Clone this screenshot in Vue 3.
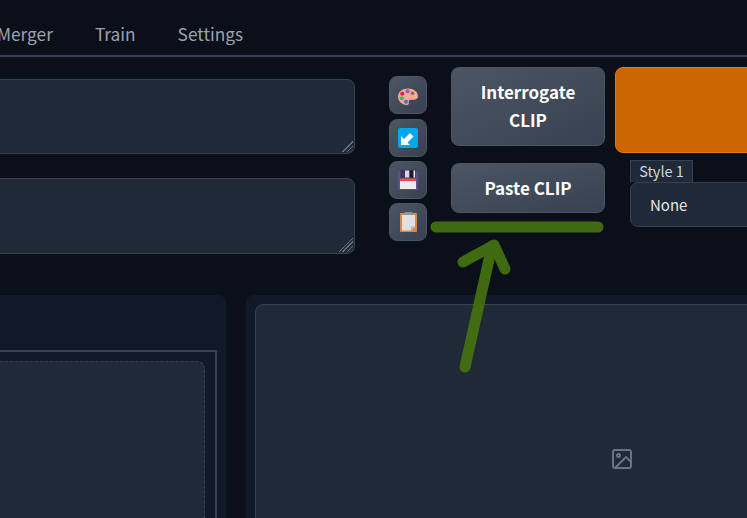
<template>
  <div class="page">
    <nav class="tabs">
      <span class="tab first">Merger</span>
      <span class="tab">Train</span>
      <span class="tab">Settings</span>
    </nav>

    <section class="top">
      <div class="prompts">
        <textarea class="prompt" aria-label="Prompt"></textarea>
        <textarea class="prompt second" aria-label="Negative prompt"></textarea>
      </div>

      <div class="tools">
        <button class="tool" type="button" aria-label="Palette">
          <svg class="palette" width="22" height="22" viewBox="0 0 22 22">
            <path d="M11 2.500C5.500 2.500 1 6 1 10.600c0 4.600 4 8.400 8.600 8.400 2 0 2.600-1.200 2.200-2.500-.5-1.600.4-2.700 2-2.700h3.200c2.200 0 4-1.400 4-3.500C21 5.600 16.500 2.500 11 2.500z" fill="#f4a998"/>
            <circle cx="5.200" cy="7.800" r="2" fill="#e8174f"/>
            <circle cx="10.500" cy="5.200" r="2" fill="#8d5bd6"/>
            <circle cx="15.500" cy="7.200" r="1.800" fill="#8a6f5c"/>
            <circle cx="4.800" cy="12.200" r="2" fill="#2fc35f"/>
            <circle cx="9" cy="15.800" r="2" fill="#5a5ee0"/>
          </svg>
        </button>
        <button class="tool" type="button" aria-label="Send to prompt">
          <svg width="20" height="20" viewBox="0 0 20 20">
            <rect width="20" height="20" rx="2" fill="#05a6ec"/>
            <path d="M3 17V8l3 3 6-6 3.500 3.500-6 6L12 17z" fill="#fff"/>
          </svg>
        </button>
        <button class="tool" type="button" aria-label="Save">
          <svg width="20" height="20" viewBox="0 0 20 20">
            <path d="M0 1h18l2 2v17H0z" fill="#5b4f8c"/>
            <rect x="2.500" y="0" width="15" height="8" fill="#3b3358"/>
            <rect x="7" y="0.500" width="4.500" height="7" fill="#d9d6e6"/>
            <rect x="11.500" y="0.500" width="4" height="7" fill="#1d1930"/>
            <rect x="15.500" y="0.500" width="1.500" height="7" fill="#e8e6ee"/>
            <rect x="2" y="8.500" width="16" height="2.500" fill="#e94b4b"/>
            <rect x="2" y="11" width="16" height="8" fill="#ececec"/>
          </svg>
        </button>
        <button class="tool" type="button" aria-label="Paste">
          <svg width="17" height="20" viewBox="0 0 17 20">
            <rect x="0" y="1" width="17" height="19" rx="1" fill="#d48a4a"/>
            <path d="M2 3h13v11.500L11 18.500H2z" fill="#dfe0e4"/>
            <path d="M11 18.500v-4h4z" fill="#b5b6bc"/>
            <rect x="4.500" y="0" width="8" height="3" rx="1" fill="#8f929a"/>
          </svg>
        </button>
      </div>

      <div class="clip">
        <button class="action tall" type="button">Interrogate<br />CLIP</button>
        <button class="action" type="button">Paste CLIP</button>
      </div>

      <div class="generate">
        <div class="orange"></div>
        <div class="style">
          <span class="style-label">Style 1</span>
          <div class="style-select">None</div>
        </div>
      </div>
    </section>

    <section class="bottom">
      <div class="panel left">
        <div class="frame">
          <div class="drop"></div>
        </div>
      </div>
      <div class="panel right">
        <div class="output">
          <svg width="24" height="24" viewBox="0 0 24 24" fill="none" stroke="#6b7280" stroke-width="2" stroke-linecap="round" stroke-linejoin="round">
            <rect x="3" y="3" width="18" height="18" rx="2" />
            <circle cx="8.500" cy="8.500" r="1.500" />
            <path d="M21 15l-5-5L5 21" />
          </svg>
        </div>
      </div>
    </section>

    <svg class="marks" width="747" height="518" viewBox="0 0 747 518" fill="none" stroke="#44720f" stroke-width="11" stroke-linecap="round" stroke-linejoin="round" aria-hidden="true">
      <path d="M436 227H598" />
      <path d="M465 367L492 246" />
      <path d="M463 262L494 245L505 269" />
    </svg>
  </div>
</template>

<script setup>
</script>

<style>
html,
body {
  margin: 0;
  background: #0b0f19;
}
</style>

<style scoped>
.page {
  position: relative;
  width: 747px;
  height: 518px;
  overflow: hidden;
  background: #0b0f19;
  font-family: "Noto Sans CJK SC", "Noto Sans", sans-serif;
}

.tabs {
  display: flex;
  align-items: center;
  gap: 42px;
  height: 43px;
  padding-top: 12px;
  border-bottom: 2px solid #374151;
  font-size: 17.300px;
  color: #9ca3af;
}

.tab.first {
  margin-left: -3px;
}

.top {
  display: flex;
  height: 238px;
}

.prompts {
  display: flex;
  flex-direction: column;
  gap: 24px;
  width: 355px;
  padding-top: 22px;
  flex: none;
}

.prompt {
  display: block;
  width: 375px;
  height: 75px;
  margin-left: -20px;
  box-sizing: border-box;
  background-color: #1f2937;
  background-image:
    linear-gradient(135deg, #1f2937 50%, transparent 50%),
    repeating-linear-gradient(135deg, #6b7280 0 1px, transparent 1px 3px);
  background-size: 14px 14px;
  background-position: right 1px bottom 1px;
  background-repeat: no-repeat;
  border: 1px solid #374151;
  border-radius: 8px;
  resize: none;
  outline: none;
}

.prompt.second {
  height: 76px;
}

.tools {
  display: flex;
  flex-direction: column;
  gap: 4px;
  width: 38px;
  margin-left: 34px;
  padding-top: 19px;
  flex: none;
}

.tool {
  display: flex;
  align-items: center;
  justify-content: center;
  width: 38px;
  height: 38px;
  padding: 0;
  box-sizing: border-box;
  background: linear-gradient(to bottom right, #4b5563, #374151);
  border: 1px solid #4b5563;
  border-radius: 8px;
}

.tool:nth-child(2) {
  margin-top: 1px;
}

.palette {
  margin-top: 4px;
}

.clip {
  display: flex;
  flex-direction: column;
  gap: 17px;
  width: 154px;
  margin-left: 24px;
  padding-top: 10px;
  flex: none;
}

.action {
  height: 50px;
  padding: 0;
  box-sizing: border-box;
  background: linear-gradient(to bottom right, #4b5563, #374151);
  border: 1px solid #4b5563;
  border-radius: 8px;
  color: #fff;
  font: 700 17px/28px "Noto Sans CJK SC", "Noto Sans", sans-serif;
}

.action.tall {
  height: 79px;
  padding-bottom: 2px;
}

.generate {
  display: flex;
  flex-direction: column;
  gap: 7px;
  margin-left: 10px;
  padding-top: 10px;
  flex: none;
  width: 160px;
}

.orange {
  height: 86px;
  background: #cc6600;
  border: 1px solid #e07b10;
  border-radius: 8px;
  box-sizing: border-box;
}

.style {
  margin-left: 15px;
}

.style-label {
  display: block;
  width: 63px;
  height: 22px;
  box-sizing: border-box;
  background: #1f2937;
  border: 1px solid #374151;
  border-bottom: 0;
  color: #d1d5db;
  font-size: 14.500px;
  line-height: 19px;
  text-align: center;
}

.style-select {
  height: 45px;
  box-sizing: border-box;
  padding-left: 19px;
  background: #1f2937;
  border: 1px solid #374151;
  border-radius: 8px;
  color: #e5e7eb;
  font-size: 15px;
  line-height: 44px;
}

.bottom {
  display: flex;
  gap: 20px;
  height: 223px;
}

.panel {
  box-sizing: border-box;
  background: #111827;
  border-radius: 8px 8px 0 0;
}

.panel.left {
  width: 226px;
  flex: none;
  padding: 55px 9px 0 0;
  border-top-left-radius: 0;
}

.frame {
  height: 168px;
  box-sizing: border-box;
  padding: 9px 10px 0 0;
  border-top: 2px solid #374151;
  border-right: 2px solid #374151;
}

.drop {
  height: 158px;
  box-sizing: border-box;
  background: #1f2937;
  border-top: 1px dashed #374151;
  border-right: 1px dashed #374151;
  border-top-right-radius: 8px;
}

.panel.right {
  flex: 1;
  padding: 9px 0 0 9px;
}

.output {
  display: flex;
  align-items: center;
  justify-content: center;
  width: 733px;
  height: 310px;
  box-sizing: border-box;
  background: #1f2937;
  border: 1px solid #374151;
  border-radius: 8px;
}

.marks {
  position: absolute;
  top: 0;
  left: 0;
  opacity: 0.92;
}
</style>
